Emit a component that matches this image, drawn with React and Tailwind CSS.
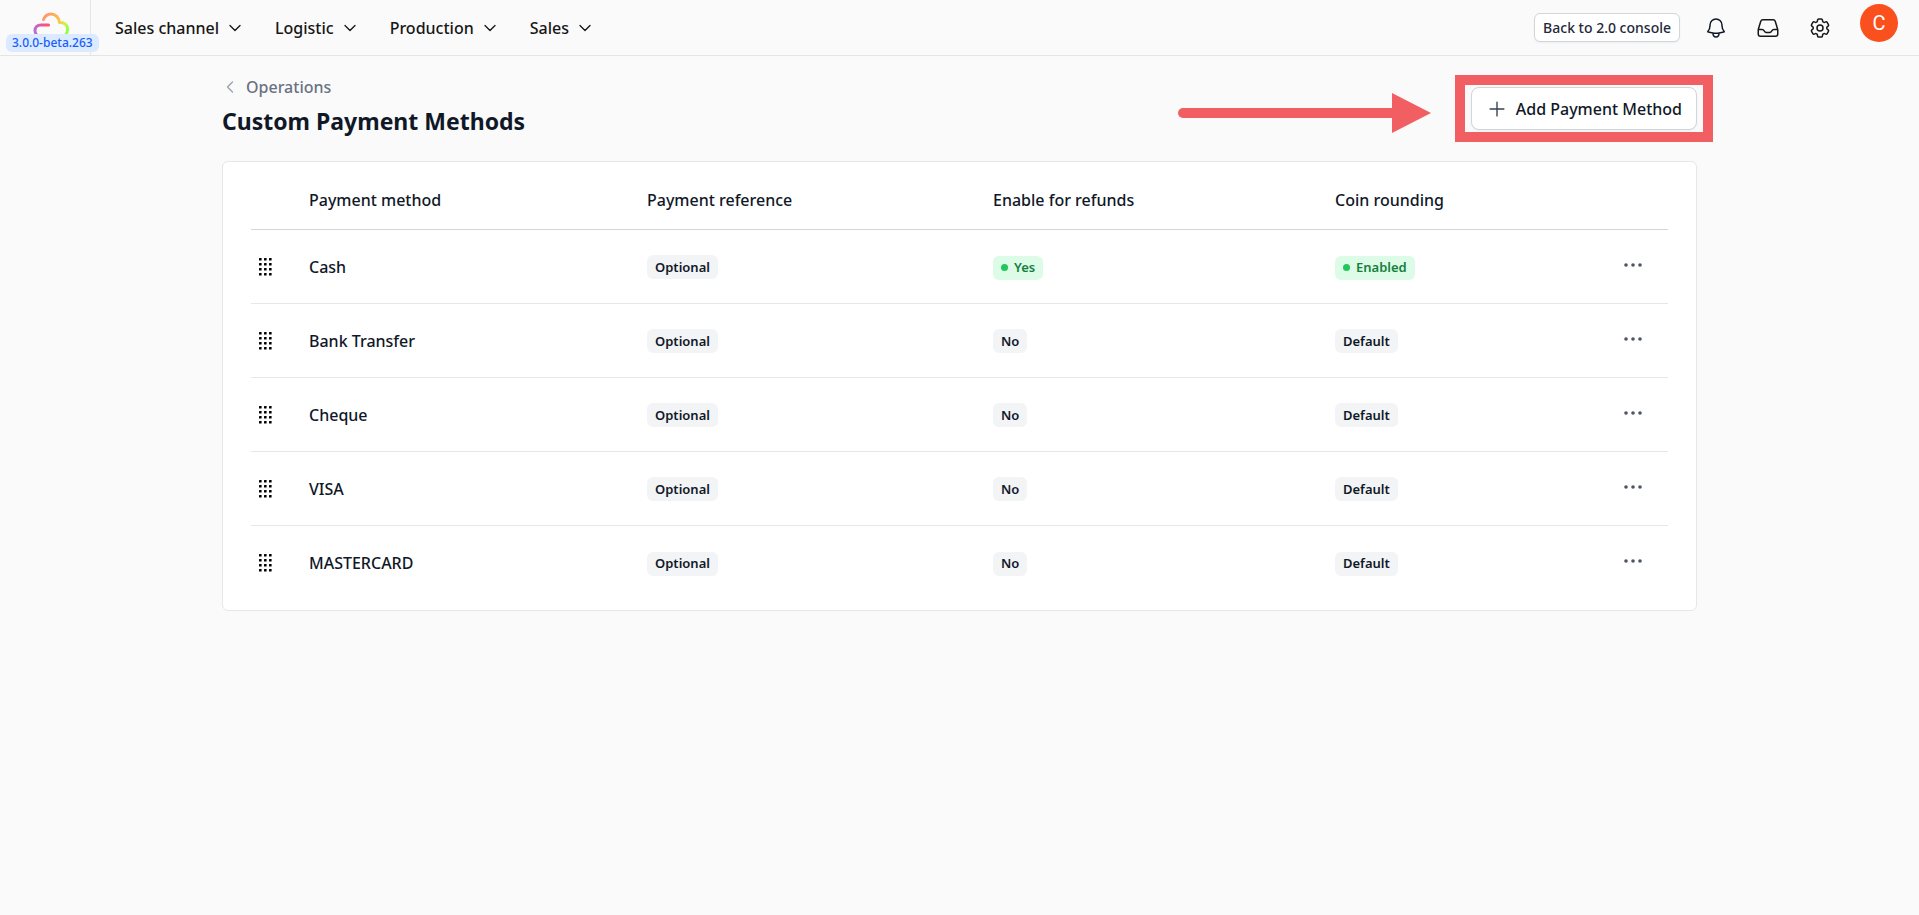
import React from 'react';
import {
  HiOutlineBell,
  HiOutlineInbox,
  HiOutlineCog6Tooth,
  HiOutlinePlus,
  HiOutlineChevronDown,
  HiOutlineChevronLeft,
} from 'react-icons/hi2';

const menus = ['Sales channel', 'Logistic', 'Production', 'Sales'];

const methods = [
  { name: 'Cash', reference: 'Optional', refunds: true, rounding: true },
  { name: 'Bank Transfer', reference: 'Optional', refunds: false, rounding: false },
  { name: 'Cheque', reference: 'Optional', refunds: false, rounding: false },
  { name: 'VISA', reference: 'Optional', refunds: false, rounding: false },
  { name: 'MASTERCARD', reference: 'Optional', refunds: false, rounding: false },
];

function CloudLogo() {
  return (
    <svg width="36" height="26" viewBox="0 0 36 26" fill="none" aria-hidden="true">
      <defs>
        <linearGradient id="cloud" x1="10" y1="4" x2="34" y2="20" gradientUnits="userSpaceOnUse">
          <stop offset="0" stopColor="#ff9470" />
          <stop offset="0.5" stopColor="#ffc04d" />
          <stop offset="0.8" stopColor="#cdf24c" />
          <stop offset="1" stopColor="#8dff4a" />
        </linearGradient>
        <linearGradient id="tail" x1="1" y1="0" x2="16" y2="0" gradientUnits="userSpaceOnUse">
          <stop stopColor="#b56fd6" />
          <stop offset="0.8" stopColor="#ff4f7b" />
        </linearGradient>
      </defs>
      <path
        d="M10.500 7.500C12 4 14.500 2 18 2c4.500 0 8 3.500 8.500 8.500 5 0 8 2.500 8 7s-3 7-7 7"
        stroke="url(#cloud)"
        strokeWidth="3"
        strokeLinecap="round"
        strokeLinejoin="round"
      />
      <path d="M15.500 13H8c-4 0-6 2.500-6 5.500s2 5.500 5 5.500" stroke="url(#tail)" strokeWidth="3" strokeLinecap="round" />
    </svg>
  );
}

function GripIcon() {
  return (
    <svg width="14" height="18" viewBox="0 0 14 18" fill="#000" aria-hidden="true">
      {[0, 5, 10].map((x) =>
        [0, 5, 10, 15].map((y) => <rect key={`${x}-${y}`} x={x} y={y} width="2.600" height="2.600" rx="0.500" />)
      )}
    </svg>
  );
}

function DotsIcon() {
  return (
    <svg width="18" height="4" viewBox="0 0 18 4" fill="#4b5563" aria-hidden="true">
      <circle cx="2" cy="2" r="1.800" />
      <circle cx="9" cy="2" r="1.800" />
      <circle cx="16" cy="2" r="1.800" />
    </svg>
  );
}

function Badge({ active, children }) {
  if (active) {
    return (
      <span className="inline-flex h-6 items-center gap-1.5 rounded-md bg-[#dcfce7] px-2 text-[13px] font-semibold text-[#15803d]">
        <span className="size-[7px] rounded-full bg-[#22c55e]" />
        {children}
      </span>
    );
  }
  return (
    <span className="inline-flex h-6 items-center rounded-md bg-gray-100 px-2 text-[13px] font-semibold text-gray-900">
      {children}
    </span>
  );
}

function Header() {
  return (
    <header className="flex h-14 items-center border-b border-[#e5e5e5] pr-[21px]">
      <div className="relative flex h-full w-[91px] shrink-0 justify-center border-r border-[#e5e5e5] pl-3 pt-3">
        <CloudLogo />
        <span className="absolute left-1.5 top-[34px] flex h-[18px] items-center rounded-md bg-blue-100 px-1.5 text-xs font-medium whitespace-nowrap text-blue-600">
          3.0.0-beta.263
        </span>
      </div>
      <nav className="flex items-center gap-8 pl-6">
        {menus.map((label) => (
          <button key={label} type="button" className="flex items-center gap-2 font-medium text-neutral-900">
            {label}
            <HiOutlineChevronDown className="size-4" strokeWidth={2} />
          </button>
        ))}
      </nav>
      <div className="ml-auto flex items-center text-neutral-900">
        <button
          type="button"
          className="mr-6 h-[29px] rounded-md border border-gray-300 bg-white px-2 text-sm font-medium text-gray-800 shadow-xs"
        >
          Back to 2.0 console
        </button>
        <button type="button" aria-label="Notifications" className="mr-7 text-gray-900">
          <HiOutlineBell className="size-6" />
        </button>
        <button type="button" aria-label="Inbox" className="mr-7">
          <HiOutlineInbox className="size-6" />
        </button>
        <button type="button" aria-label="Settings" className="mr-7">
          <HiOutlineCog6Tooth className="size-6" />
        </button>
        <button
          type="button"
          className="mb-2.5 flex size-[38px] items-center justify-center rounded-full bg-[#f9501e] font-['Roboto',sans-serif] text-xl text-white"
        >
          C
        </button>
      </div>
    </header>
  );
}

export default function App() {
  return (
    <div className="min-h-screen bg-[#fafafa] font-['Noto_Sans','Open_Sans',sans-serif] text-base text-gray-900">
      <Header />
      <main className="mx-auto w-full max-w-[1475px] pt-[19px]">
        <div className="flex items-start justify-between">
          <div>
            <a href="#operations" className="flex h-6 items-center gap-2 font-medium text-gray-500">
              <HiOutlineChevronLeft className="size-4 text-gray-400" strokeWidth={2} />
              Operations
            </a>
            <h1 className="mt-1.5 text-[23px] leading-8 font-bold">Custom Payment Methods</h1>
          </div>
          <div className="relative mt-3">
            <button
              type="button"
              className="flex h-[43px] items-center gap-2 rounded-lg border border-gray-300 bg-white px-3.5 font-medium shadow-xs"
            >
              <HiOutlinePlus className="size-[22px] text-gray-700" />
              Add Payment Method
            </button>
            <div className="pointer-events-none absolute -inset-x-4 -top-3 -bottom-3 border-[10px] border-[#f25f63]" />
            <svg
              className="pointer-events-none absolute top-1.5 right-full mr-10"
              width="253"
              height="40"
              viewBox="0 0 253 40"
              fill="#f25f63"
              aria-hidden="true"
            >
              <path d="M5 15h210v10H5a5 5 0 0 1 0-10z" />
              <path d="M214 0l39 20-39 20z" />
            </svg>
          </div>
        </div>

        <div className="mt-6 rounded-md border border-gray-200 bg-white px-7 pt-2 pb-2.5">
          <table className="w-full table-fixed border-separate border-spacing-0 text-left [&_th]:border-b [&_th]:border-gray-300 [&_td]:border-gray-200 [&_tr:not(:last-child)>td]:border-b">
            <colgroup>
              <col className="w-[58px]" />
              <col className="w-[338px]" />
              <col className="w-[346px]" />
              <col className="w-[342px]" />
              <col />
              <col className="w-[68px]" />
            </colgroup>
            <thead>
              <tr className="h-[60px]">
                <th aria-label="Order" />
                <th className="font-medium">Payment method</th>
                <th className="font-medium">Payment reference</th>
                <th className="font-medium">Enable for refunds</th>
                <th className="font-medium">Coin rounding</th>
                <th aria-label="Actions" />
              </tr>
            </thead>
            <tbody>
              {methods.map((m) => (
                <tr key={m.name} className="h-[74px]">
                  <td className="pl-2">
                    <GripIcon />
                  </td>
                  <td className="font-medium">{m.name}</td>
                  <td>
                    <Badge>{m.reference}</Badge>
                  </td>
                  <td>
                    <Badge active={m.refunds}>{m.refunds ? 'Yes' : 'No'}</Badge>
                  </td>
                  <td>
                    <Badge active={m.rounding}>{m.rounding ? 'Enabled' : 'Default'}</Badge>
                  </td>
                  <td className="pb-1">
                    <button type="button" aria-label={`Actions for ${m.name}`} className="ml-6 flex h-6 items-center">
                      <DotsIcon />
                    </button>
                  </td>
                </tr>
              ))}
            </tbody>
          </table>
        </div>
      </main>
    </div>
  );
}
